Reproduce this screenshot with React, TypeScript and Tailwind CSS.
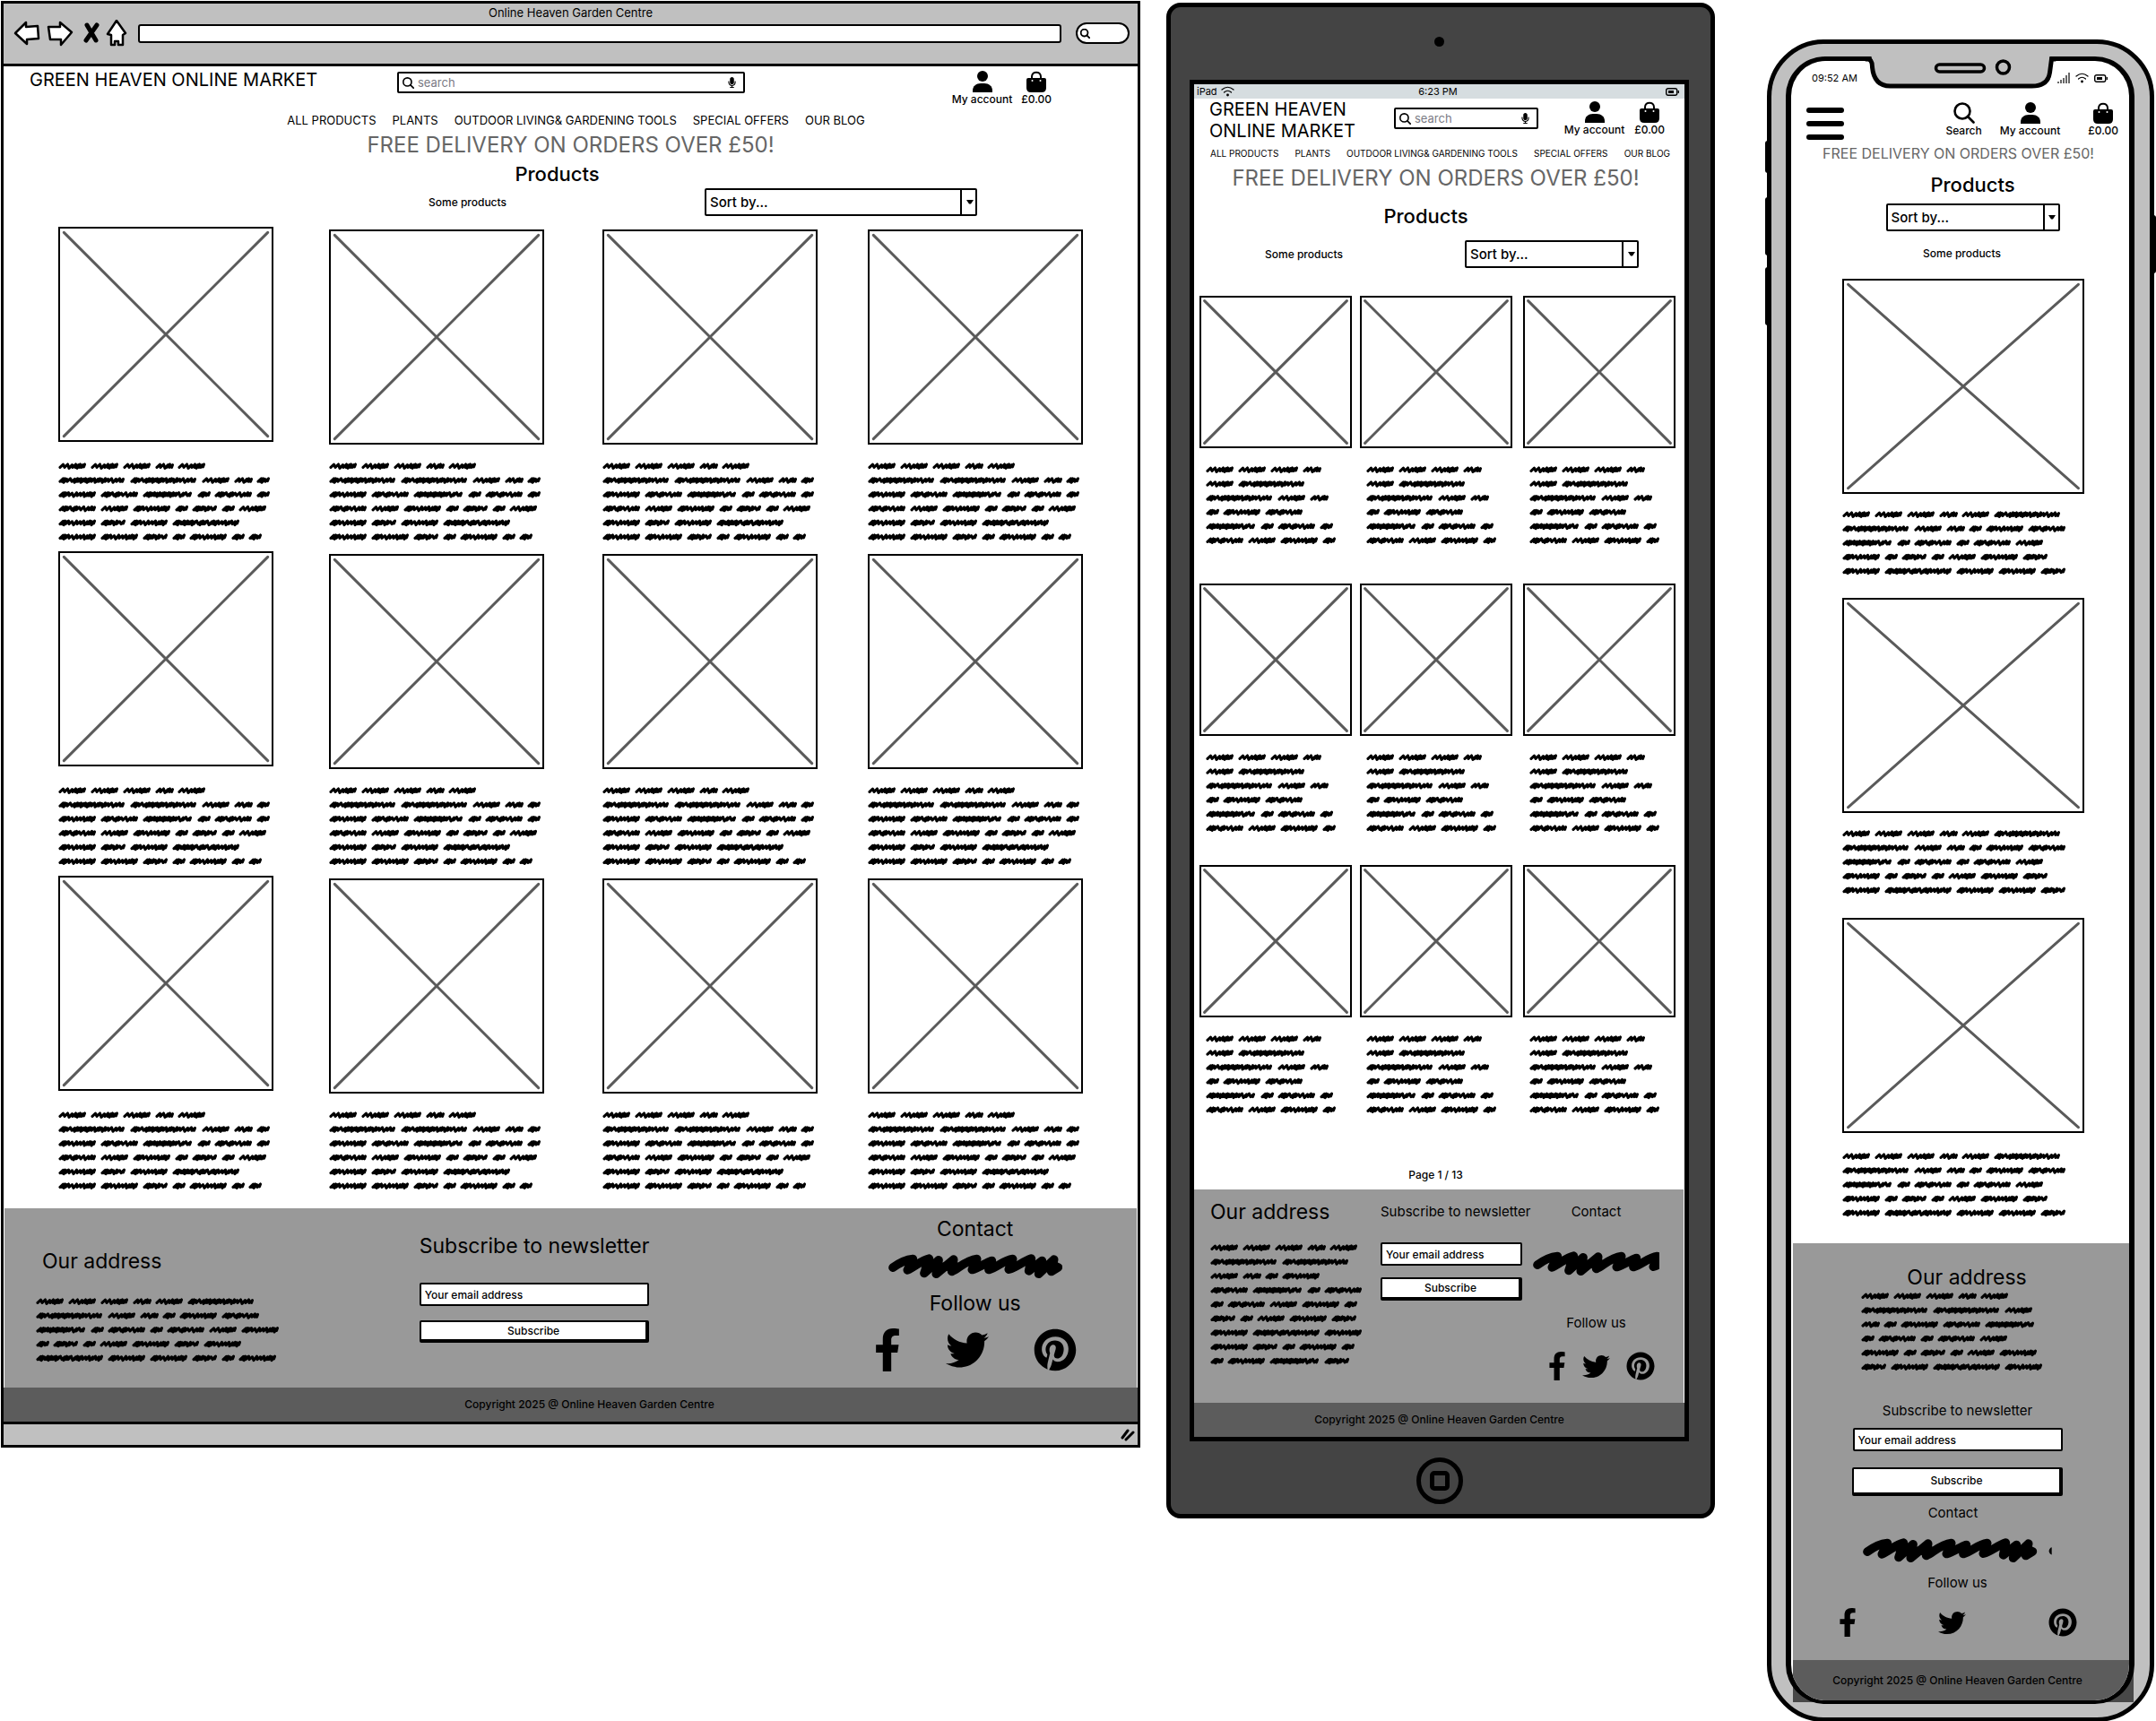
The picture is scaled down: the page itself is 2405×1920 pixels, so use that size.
import React from "react";
import { FaFacebookF, FaMicrophone, FaPinterest, FaTwitter } from "react-icons/fa";

/* ---------- scribbled placeholder copy ---------- */

type WordKind = { width: number; steps: number[] };

const WORDS: Record<string, WordKind> = {
  A: { width: 31, steps: [5, 5, 4, 3, 2, 3, 2] },
  B: { width: 20, steps: [4, 5, 2, 3] },
  C: { width: 75, steps: [2, 2, 4, 5, 3, 2, 2, 3, 2, 3, 2, 2, 3, 4, 2, 2, 4, 3, 4, 5, 4, 4] },
  D: { width: 14, steps: [2, 2, 4] },
  E: { width: 42, steps: [2, 2, 2, 4, 5, 4, 4, 4, 3, 2, 3] },
  F: { width: 42, steps: [3, 2, 3, 5, 2, 3, 5, 5, 4, 3] },
  G: { width: 56, steps: [3, 2, 3, 3, 3, 3, 2, 2, 3, 2, 3, 3, 3, 5, 3, 5] },
  H: { width: 28, steps: [2, 2, 3, 2, 4, 3, 5] },
  J: { width: 75, steps: [2, 2, 4, 2, 2, 3, 2, 3, 2, 5, 2, 3, 2, 5, 2, 3, 2, 4, 4, 4, 3, 4, 3] },
};

const WORD_GAP = 5;
const LINE_PITCH = 15.8;

function wordPath(kind: WordKind, x: number, y: number) {
  let low = x + 2;
  let d = `M${low} ${y + 1.4}L${low + 3.5} ${y - 1.8}`;
  kind.steps.forEach((step, i) => {
    low += step;
    const drop = i % 3 === 1 ? 2.4 : 1.4;
    d += `L${low} ${y + drop}L${low + 3.5} ${y - (i % 2 ? 1.4 : 2)}`;
  });
  return d + `l-1 2.8`;
}

function Scribble({ lines, className = "" }: { lines: string[]; className?: string }) {
  let widest = 0;
  const paths: string[] = [];
  lines.forEach((line, row) => {
    let x = 0;
    for (const key of line) {
      paths.push(wordPath(WORDS[key], x, 5 + row * LINE_PITCH));
      x += WORDS[key].width + WORD_GAP;
    }
    widest = Math.max(widest, x);
  });
  const height = Math.round((lines.length - 1) * LINE_PITCH) + 10;
  return (
    <svg
      aria-hidden="true"
      width={widest}
      height={height}
      className={`block shrink-0 ${className}`}
      fill="none"
      stroke="black"
      strokeWidth="3.1"
      strokeLinecap="round"
      strokeLinejoin="round"
    >
      <path d={paths.join("")} />
    </svg>
  );
}

function BigScribble({ className = "", tail = false }: { className?: string; tail?: boolean }) {
  return (
    <svg
      aria-hidden="true"
      width="211"
      height="27"
      viewBox="0 0 633 80"
      className={`block shrink-0 ${className}`}
      fill="none"
      stroke="black"
      strokeWidth="29"
      strokeLinecap="round"
      strokeLinejoin="round"
    >
      <path d="M15 45C35 30 60 18 82 16L64 53C90 42 110 20 136 15L120 64L168 20L160 66L218 18L212 58C235 48 260 20 296 16L280 52C300 46 325 30 346 22L336 52C365 44 385 20 416 16L403 51C430 44 450 24 478 15L470 56L514 22L503 66L554 18L545 58L568 44" />
      <path d="M125 46L225 40M475 44L560 40" />
      {tail && <path d="M632 30c-12 3-12 22 0 25z" fill="black" stroke="none" />}
    </svg>
  );
}

/* ---------- icons ---------- */

function UserIcon() {
  return (
    <svg aria-hidden="true" width="22" height="24" viewBox="0 0 22 24">
      <ellipse cx="11" cy="6" rx="6" ry="6" />
      <path d="M0 24v-2c0-5 4-8 9-8h4c5 0 9 3 9 8v2z" />
    </svg>
  );
}

function BagIcon() {
  return (
    <svg aria-hidden="true" width="22" height="24" viewBox="0 0 22 24">
      <path d="M6 11V6.500C6 0 16 0 16 6.500V11" fill="none" stroke="black" strokeWidth="2" />
      <path d="M2 8h18q2 0 2 2v9q0 5-5 5H5q-5 0-5-5v-9q0-2 2-2z" />
      <circle cx="6.500" cy="11" r="1" fill="white" />
      <circle cx="15.500" cy="11" r="1" fill="white" />
    </svg>
  );
}

function SearchIcon({ size, stroke }: { size: number; stroke: number }) {
  return (
    <svg aria-hidden="true" width={size} height={size} viewBox="0 0 24 24" className="shrink-0" fill="none" stroke="black" strokeWidth={stroke} strokeLinecap="round">
      <circle cx="10" cy="10" r="8.500" />
      <path d="M16 16l6.500 6.500" />
    </svg>
  );
}

function WifiIcon() {
  return (
    <svg aria-hidden="true" width="15" height="12" viewBox="0 0 15 12" fill="none" stroke="black" strokeWidth="1.200" strokeLinecap="round">
      <path d="M1 4Q7.500-1.500 14 4M3.500 7Q7.500 3.500 11.500 7" />
      <circle cx="7.500" cy="10" r="0.800" fill="black" />
    </svg>
  );
}

function BatteryIcon() {
  return (
    <svg aria-hidden="true" width="15" height="9" viewBox="0 0 15 9" fill="none" stroke="black" strokeWidth="1.400">
      <rect x="0.700" y="0.700" width="12" height="7.600" rx="2" />
      <path d="M14.300 3v3" />
      <rect x="3" y="3" width="6" height="3" fill="black" stroke="none" />
    </svg>
  );
}

function SignalIcon() {
  return (
    <svg aria-hidden="true" width="14" height="12" viewBox="0 0 14 12" stroke="black" strokeWidth="1.200">
      <path d="M1 12v-2M4 12V8M7 12V6M10 12V3M13 12V0" />
    </svg>
  );
}

/* ---------- shared controls ---------- */

function SearchBox({ className }: { className: string }) {
  return (
    <label className={`flex h-[24px] min-w-0 items-center gap-1 rounded-[2px] border-[2px] border-black bg-white pl-1 pr-2 ${className}`}>
      <SearchIcon size={13} stroke={3} />
      <input
        type="text"
        aria-label="Search the shop"
        placeholder="search"
        className="h-5 w-full min-w-0 bg-transparent text-[13px] leading-5 outline-none placeholder:text-[#7b7b85]"
      />
      <FaMicrophone className="h-[12px] w-[9px] shrink-0" />
    </label>
  );
}

function SortSelect({ className }: { className: string }) {
  return (
    <div className={`relative h-[31px] ${className}`}>
      <select aria-label="Sort products" className="h-full w-full appearance-none rounded-[2px] border-[2px] border-black bg-white pl-1 text-[15px] leading-6 font-medium text-black">
        <option>Sort by...</option>
      </select>
      <span className="pointer-events-none absolute inset-y-0 right-0 flex w-[19px] items-center justify-center border-l-2 border-black">
        <svg aria-hidden="true" width="8" height="5" viewBox="0 0 8 5">
          <path d="M0 0h8L5 4.500H3z" />
        </svg>
      </span>
    </div>
  );
}

function IconLink({ label, children }: { label: string; children: React.ReactNode }) {
  return (
    <a href="#" className="flex flex-col items-center text-[12px] leading-4 font-medium whitespace-nowrap">
      <span className="flex h-[24px] items-end">{children}</span>
      {label}
    </a>
  );
}

function NavLinks() {
  return (
    <>
      {["ALL PRODUCTS", "PLANTS", "OUTDOOR LIVING& GARDENING TOOLS", "SPECIAL OFFERS", "OUR BLOG"].map((item) => (
        <a key={item} href="#" className="whitespace-nowrap">
          {item}
        </a>
      ))}
    </>
  );
}

function Placeholder({ className }: { className: string }) {
  return (
    <div className={`border-[2px] border-black bg-white p-[2px] ${className}`}>
      <svg aria-hidden="true" className="block h-full w-full" viewBox="0 0 100 100" preserveAspectRatio="none" stroke="#5a5a5a" strokeWidth="3" strokeLinecap="round">
        <path d="M1 1L99 99M99 1L1 99" vectorEffect="non-scaling-stroke" />
      </svg>
    </div>
  );
}

function EmailField({ className }: { className: string }) {
  return (
    <input
      type="email"
      aria-label="Your email address"
      placeholder="Your email address"
      className={`block rounded-[2px] border-[2px] border-black bg-white px-1 text-[12px] font-medium leading-4 outline-none placeholder:text-black ${className}`}
    />
  );
}

function SubscribeButton({ className }: { className: string }) {
  return (
    <button type="button" className={`block rounded-[2px] border-2 border-r-4 border-b-4 border-black bg-white text-[12px] font-medium leading-4 ${className}`}>
      Subscribe
    </button>
  );
}

function Socials({ className, large = false }: { className: string; large?: boolean }) {
  return (
    <div className={`flex items-center ${className}`}>
      <a href="#" aria-label="Facebook">
        <FaFacebookF className={large ? "h-[48px] w-[30px]" : "h-[32px] w-[20px]"} />
      </a>
      <a href="#" aria-label="Twitter">
        <FaTwitter className={large ? "size-[48px]" : "size-[31px]"} />
      </a>
      <a href="#" aria-label="Pinterest">
        <FaPinterest className={large ? "size-[48px]" : "size-[32px]"} />
      </a>
    </div>
  );
}

function Copyright({ className }: { className: string }) {
  return (
    <div className={`flex items-center justify-center bg-[#5c5c5c] text-[12px] leading-4 font-medium ${className}`}>
      Copyright 2025 @ Online Heaven Garden Centre
    </div>
  );
}

/* ---------- desktop browser ---------- */

const DESKTOP_COPY = ["AAABA", "CCABD", "EFGDFD", "FAEDHDA", "EHEJ", "EEHDEDD"];
const DESKTOP_ADDRESS = ["AAABAC", "CABDEF", "GDFDFAE", "DHDAEHE", "JEEHDE"];

function BrowserChrome() {
  return (
    <div className="border-b-[3px] border-black bg-[#c0c0c0] pb-[19px]">
      <div className="pt-[2px] text-center text-[13px] leading-4">Online Heaven Garden Centre</div>
      <div className="flex h-[30px] items-center pl-2 pr-[9px]">
        <svg aria-hidden="true" width="130" height="30" viewBox="0 0 130 30" className="shrink-0" fill="white" stroke="black" strokeWidth="2.500" strokeLinejoin="round" strokeLinecap="round">
          <path d="M5 15L17 3V8L30 7L31 21L18 22V27Z" />
          <path d="M42 8L55 8V3L68 14L56 28V22L44 22Z" />
          <path d="M85 6L95 23M96 6L84 23" strokeWidth="5" />
          <path d="M118 1L108 16L112 17V28H116V24H120V28H125V17L128 15Z" />
        </svg>
        <input aria-label="Address" className="ml-3 h-[21px] min-w-0 flex-1 rounded-[3px] border-[2px] border-black bg-white px-2 text-[12px] outline-none" />
        <label className="ml-4 flex h-[24px] w-[60px] items-center rounded-[14px] border-[2px] border-black bg-white pl-[3px]">
          <SearchIcon size={11} stroke={4} />
          <input aria-label="Web search" className="w-full min-w-0 bg-transparent text-[12px] outline-none" />
        </label>
      </div>
    </div>
  );
}

function Desktop() {
  return (
    <section className="mt-px mr-[29px] min-w-0 border-[3px] border-black bg-white">
      <BrowserChrome />
      <header className="grid grid-cols-[439fr_388fr_438fr] items-start">
        <h1 className="mt-[3px] pl-[29px] text-[20px] leading-6 whitespace-nowrap">GREEN HEAVEN ONLINE MARKET</h1>
        <SearchBox className="mt-[6px]" />
        <div className="mt-[5px] flex justify-end gap-[10px] pr-[96px]">
          <IconLink label="My account">
            <UserIcon />
          </IconLink>
          <IconLink label="£0.00">
            <BagIcon />
          </IconLink>
        </div>
      </header>
      <nav className="mt-[5px] flex h-5 items-center justify-center gap-[18px] pl-[12px] text-[13px] leading-5">
        <NavLinks />
      </nav>
      <p className="mt-[3px] text-center text-[24px] leading-[30px] text-[#666]">FREE DELIVERY ON ORDERS OVER £50!</p>
      <h2 className="mt-[3px] pr-[30px] text-center text-[22px] leading-7 font-medium">Products</h2>
      <div className="mt-[2px] flex items-center pl-[474px]">
        <span className="w-[308px] text-[12px] leading-4 font-medium">Some products</span>
        <SortSelect className="w-[304px]" />
      </div>
      <div className="mt-3 grid grid-cols-[302fr_305fr_296fr_301fr] gap-y-[11px] pl-[61px]">
        {Array.from({ length: 12 }, (_, i) => (
          <article key={i} className="min-w-0">
            <div className={i % 4 ? "pt-[3px]" : "pb-[3px]"}>
              <Placeholder className="h-[240px] w-[240px]" />
            </div>
            <Scribble lines={DESKTOP_COPY} className="mt-[19px]" />
          </article>
        ))}
      </div>
      <footer className="mt-5">
        <div className="mx-px grid grid-cols-[464fr_253fr_545fr] bg-[#999] pb-[18px]">
          <div className="pt-[45px]">
            <h3 className="pl-[42px] text-[23px] leading-7">Our address</h3>
            <Scribble lines={DESKTOP_ADDRESS} className="mt-[26px] ml-[35px]" />
          </div>
          <div className="pt-[28px]">
            <h3 className="text-[23px] leading-7 whitespace-nowrap">Subscribe to newsletter</h3>
            <EmailField className="mt-[27px] h-[26px] w-full" />
            <SubscribeButton className="mt-4 h-[25px] w-full" />
          </div>
          <div className="flex flex-col items-center pt-[9px] pl-[183px]">
            <h3 className="text-[23px] leading-7">Contact</h3>
            <div className="mt-[14px] w-[194px] overflow-hidden">
              <BigScribble />
            </div>
            <h3 className="mt-[14px] text-[23px] leading-7">Follow us</h3>
            <Socials large className="mt-[14px] gap-[50px]" />
          </div>
        </div>
        <Copyright className="h-[38px] pl-[42px]" />
      </footer>
      <div className="flex h-[26px] items-center justify-end border-t-[3px] border-black bg-[#c0c0c0] pr-[3px]">
        <svg aria-hidden="true" width="16" height="14" viewBox="0 0 16 14" stroke="black" strokeWidth="3" strokeLinecap="round">
          <path d="M2 10L8 2M6 12L14 4" />
        </svg>
      </div>
    </section>
  );
}

/* ---------- tablet ---------- */

const TABLET_COPY = ["AAAB", "AC", "CAB", "DEF", "GDFD", "FAED"];
const TABLET_ADDRESS = ["AAABA", "CC", "ABDE", "FGDF", "DFAED", "HDAEH", "EJE", "EHDED", "DEGH"];

function TabletRow({ className }: { className: string }) {
  return (
    <div className={`grid grid-cols-[179fr_182fr_180fr] pl-[6px] ${className}`}>
      {[0, 1, 2].map((i) => (
        <article key={i} className="min-w-0">
          <Placeholder className="h-[170px] w-[170px]" />
          <Scribble lines={TABLET_COPY} className="mt-[19px] ml-[7px]" />
        </article>
      ))}
    </div>
  );
}

function Tablet() {
  return (
    <section className="mt-[3px] mr-[58px] min-w-0 rounded-[16px] border-[5px] border-black bg-[#444] pr-[24px] pl-[21px]">
      <div className="flex h-[81px] items-center justify-center pb-1">
        <span className="size-[11px] rounded-full bg-black" />
      </div>
      <div className="border-[5px] border-black bg-white">
        <div className="grid h-4 grid-cols-3 items-center bg-[#d6dde0] pr-[6px] pl-[3px] text-[11px] leading-4">
          <span className="flex items-center gap-1">
            iPad <WifiIcon />
          </span>
          <span className="text-center">6:23 PM</span>
          <span className="flex justify-end">
            <BatteryIcon />
          </span>
        </div>
        <header className="grid grid-cols-[223fr_161fr_163fr] items-start">
          <h1 className="pl-[17px] text-[20px] leading-6 whitespace-nowrap">
            GREEN HEAVEN
            <br />
            ONLINE MARKET
          </h1>
          <SearchBox className="mt-[10px]" />
          <div className="mt-[3px] flex justify-end gap-[11px] pr-[22px]">
            <IconLink label="My account">
              <UserIcon />
            </IconLink>
            <IconLink label="£0.00">
              <BagIcon />
            </IconLink>
          </div>
        </header>
        <nav className="mt-[5px] flex h-4 items-center justify-between pr-4 pl-[18px] text-[10px] leading-4">
          <NavLinks />
        </nav>
        <p className="mt-[5px] pr-2 text-center text-[24px] leading-[30px] whitespace-nowrap text-[#666]">FREE DELIVERY ON ORDERS OVER £50!</p>
        <h2 className="mt-[13px] pr-[30px] text-center text-[22px] leading-7 font-medium">Products</h2>
        <div className="mt-[13px] flex items-center pl-[79px]">
          <span className="w-[223px] text-[12px] leading-4 font-medium">Some products</span>
          <SortSelect className="w-[194px]" />
        </div>
        <TabletRow className="mt-[31px]" />
        <TabletRow className="mt-[43px]" />
        <TabletRow className="mt-[36px]" />
        <p className="mt-[60px] mb-2 pr-2 text-center text-[12px] leading-4 font-medium">Page 1 / 13</p>
        <footer>
          <div className="mr-px grid grid-cols-[208fr_170fr_168fr] bg-[#999] pt-[11px] pb-[25px]">
            <div className="pl-[18px]">
              <h3 className="text-[23px] leading-7">Our address</h3>
              <Scribble lines={TABLET_ADDRESS} className="mt-[21px]" />
            </div>
            <div>
              <h3 className="text-[15px] leading-7 whitespace-nowrap">Subscribe to newsletter</h3>
              <EmailField className="mt-5 h-[26px] w-[158px]" />
              <SubscribeButton className="mt-[13px] h-[26px] w-[158px]" />
            </div>
            <div className="flex w-[141px] flex-col items-center">
              <h3 className="text-[15px] leading-7">Contact</h3>
              <div className="mt-[30px] w-full overflow-hidden">
                <BigScribble />
              </div>
              <h3 className="mt-[39px] text-[15px] leading-7">Follow us</h3>
              <Socials className="mt-[18px] gap-[18px] pl-[12px]" />
            </div>
          </div>
          <Copyright className="h-[38px]" />
        </footer>
      </div>
      <div className="flex h-[81px] items-center justify-center pt-[6px]">
        <button type="button" aria-label="Home" className="flex size-[52px] items-center justify-center rounded-full border-[5px] border-black">
          <span className="size-[22px] rounded-[5px] border-[5px] border-black" />
        </button>
      </div>
    </section>
  );
}

/* ---------- phone ---------- */

const PHONE_COPY = ["AAABAC", "CABDEF", "GDFDFA", "EDHDAEH", "EJEEH"];
const PHONE_ADDRESS = ["AAABA", "CCA", "BDEFG", "DFDFA", "EDHDAE", "HEJE"];

function PhoneCard({ className, copyClass }: { className: string; copyClass: string }) {
  return (
    <article className={`pl-[57px] ${className}`}>
      <Placeholder className="h-[240px] w-[270px]" />
      <Scribble lines={PHONE_COPY} className={copyClass} />
    </article>
  );
}

function Phone() {
  return (
    <section className="relative mt-[44px] min-w-0 rounded-[64px] border-[5px] border-black bg-[#c0c0c0] pt-[14px] pr-[17px] pb-[15px] pl-4">
      <span className="absolute top-[108px] -left-[7px] h-[36px] w-[3px] rounded-l bg-black" />
      <span className="absolute top-[171px] -left-[7px] h-[65px] w-[3px] rounded-l bg-black" />
      <span className="absolute top-[249px] -left-[7px] h-[65px] w-[3px] rounded-l bg-black" />
      <span className="absolute top-[191px] -right-[7px] h-[65px] w-[3px] rounded-r bg-black" />
      <span className="absolute right-[18px] bottom-[17px] left-6 h-[46px] bg-[#484848]" />
      <svg aria-hidden="true" width="213" height="37" viewBox="0 0 213 37" className="absolute top-[14px] left-1/2 z-10 -translate-x-1/2">
        <path d="M7 0H206V18Q204 33 186 33H30Q11 33 9 12Z" fill="#c0c0c0" />
        <path d="M0 3H3Q8 3 8 12Q10 33 28 33H186Q204 33 206 18L208 3H213" fill="none" stroke="black" strokeWidth="5" />
        <rect x="79" y="9" width="54" height="8" rx="4" fill="none" stroke="black" strokeWidth="3.500" />
        <ellipse cx="154" cy="12" rx="7" ry="7" fill="none" stroke="black" strokeWidth="3.500" />
      </svg>
      <div className="relative overflow-hidden rounded-[44px] border-[6px] border-t-[5px] border-b-[4px] border-black bg-white">
        <div className="flex items-center justify-between pt-[11px] pr-6 pl-[23px] text-[11px] leading-4">
          <span>09:52 AM</span>
          <span className="flex items-center gap-[6px]">
            <SignalIcon />
            <WifiIcon />
            <BatteryIcon />
          </span>
        </div>
        <header className="mt-[19px] flex items-start pr-3 pl-[17px]">
          <button type="button" aria-label="Menu" className="mt-[6px] flex w-[42px] flex-col gap-[9px]">
            <span className="h-[6px] rounded-full bg-black" />
            <span className="h-[6px] rounded-full bg-black" />
            <span className="h-[6px] rounded-full bg-black" />
          </button>
          <div className="ml-auto flex items-start">
            <IconLink label="Search">
              <SearchIcon size={24} stroke={2.6} />
            </IconLink>
            <div className="ml-[20px]">
              <IconLink label="My account">
                <UserIcon />
              </IconLink>
            </div>
            <div className="ml-[31px]">
              <IconLink label="£0.00">
                <BagIcon />
              </IconLink>
            </div>
          </div>
        </header>
        <p className="mt-[5px] pr-1 text-center text-[16px] leading-5 whitespace-nowrap text-[#666]">FREE DELIVERY ON ORDERS OVER £50!</p>
        <h2 className="mt-[11px] pl-[28px] text-center text-[22px] leading-7 font-medium">Products</h2>
        <div className="mt-[7px] flex justify-center pl-[28px]">
          <SortSelect className="w-[194px]" />
        </div>
        <p className="mt-[17px] pl-[4px] text-center text-[12px] leading-4 font-medium">Some products</p>
        <PhoneCard className="mt-5" copyClass="mt-[18px]" />
        <PhoneCard className="mt-[25px]" copyClass="mt-[18px]" />
        <PhoneCard className="mt-[26px]" copyClass="mt-[21px]" />
        <footer className="mt-[29px] ml-[2px]">
          <div className="flex flex-col items-center bg-[#999] pt-6 pb-[26px]">
            <h3 className="pl-[13px] text-[23px] leading-7">Our address</h3>
            <Scribble lines={PHONE_ADDRESS} className="mt-[2px] mr-4" />
            <h3 className="mt-[34px] pr-2 text-[15px] leading-5">Subscribe to newsletter</h3>
            <EmailField className="mt-[9px] mr-2 h-[26px] w-[234px]" />
            <SubscribeButton className="mt-[18px] mr-2 h-8 w-[235px]" />
            <h3 className="mt-[9px] pr-[18px] text-[15px] leading-5">Contact</h3>
            <BigScribble tail className="mt-[18px] mr-2" />
            <h3 className="mt-[13px] pr-2 text-[15px] leading-5">Follow us</h3>
            <Socials className="mt-[18px] mr-2 w-[266px] justify-between" />
          </div>
          <Copyright className="h-[45px] pr-2" />
        </footer>
      </div>
    </section>
  );
}

export default function App() {
  return (
    <main className="grid grid-cols-[1300fr_670fr_432fr] items-start bg-white pr-[2px] pl-px font-['Inter',sans-serif] text-black">
      <Desktop />
      <Tablet />
      <Phone />
    </main>
  );
}
